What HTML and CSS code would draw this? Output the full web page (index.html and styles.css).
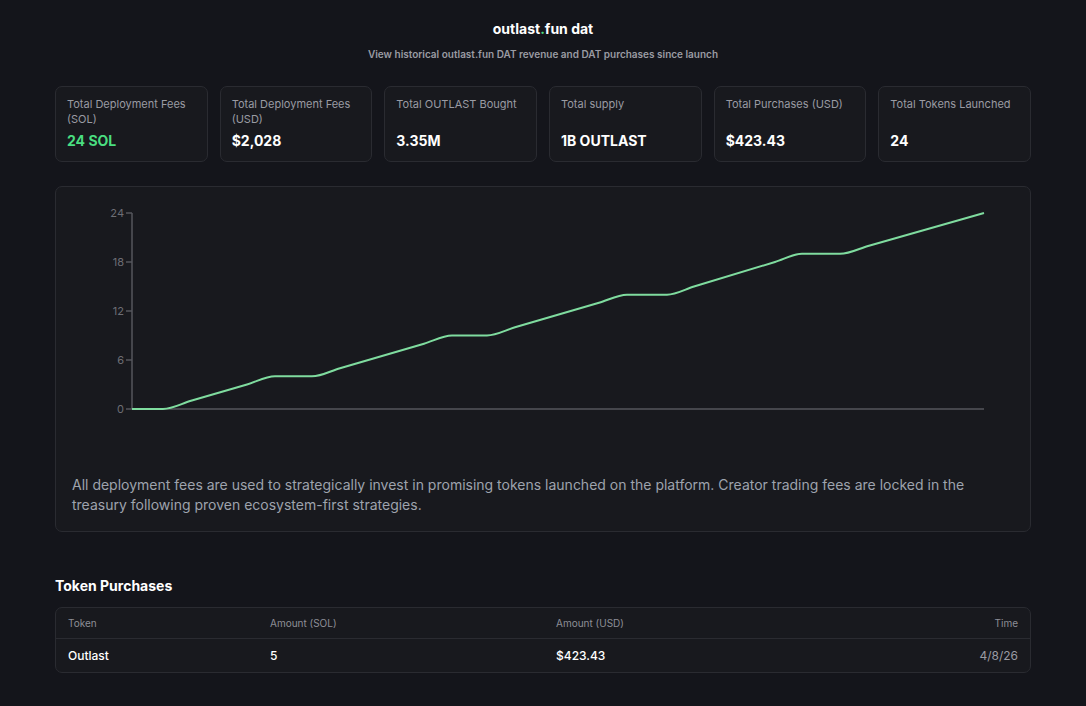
FILE: index.html
```html
<!DOCTYPE html>
<html>
<head>
<meta charset="utf-8">
<link rel="stylesheet" href="styles.css">
</head>
<body>
<main class="page">
  <header class="head">
    <h1 class="title">outlast<span class="dot">.</span>fun dat</h1>
    <p class="subtitle">View historical outlast.fun DAT revenue and DAT purchases since launch</p>
  </header>

  <section class="stats">
    <div class="stat">
      <div class="stat-label">Total Deployment Fees (SOL)</div>
      <div class="stat-value green">24 SOL</div>
    </div>
    <div class="stat">
      <div class="stat-label">Total Deployment Fees (USD)</div>
      <div class="stat-value">$2,028</div>
    </div>
    <div class="stat">
      <div class="stat-label">Total OUTLAST Bought</div>
      <div class="stat-value">3.35M</div>
    </div>
    <div class="stat">
      <div class="stat-label">Total supply</div>
      <div class="stat-value">1B OUTLAST</div>
    </div>
    <div class="stat">
      <div class="stat-label">Total Purchases (USD)</div>
      <div class="stat-value">$423.43</div>
    </div>
    <div class="stat">
      <div class="stat-label">Total Tokens Launched</div>
      <div class="stat-value">24</div>
    </div>
  </section>

  <section class="chart-card">
    <svg class="chart" width="942" height="256" viewBox="0 0 942 256">
      <g class="ticks">
        <line x1="54" y1="10" x2="60" y2="10"/>
        <line x1="54" y1="59" x2="60" y2="59"/>
        <line x1="54" y1="108" x2="60" y2="108"/>
        <line x1="54" y1="157" x2="60" y2="157"/>
        <line x1="54" y1="206" x2="60" y2="206"/>
      </g>
      <g class="tick-labels">
        <text x="52" y="14">24</text>
        <text x="52" y="63">18</text>
        <text x="52" y="112">12</text>
        <text x="52" y="161">6</text>
        <text x="52" y="210">0</text>
      </g>
      <line class="axis" x1="60" y1="10" x2="60" y2="206"/>
      <line class="axis" x1="60" y1="206" x2="912" y2="206"/>
      <path class="series" d="M60,206 L91,206 C100.33,206 109.67,200.55 119,197.83 L175,181.5 C184.33,178.78 193.67,173.33 203,173.33 L240,173.33 C249.33,173.33 258.67,167.89 268,165.17 L352,140.67 C361.33,137.95 370.67,132.5 380,132.5 L415,132.5 C424.33,132.5 433.67,127.05 443,124.33 L527,99.83 C536.33,97.11 545.67,91.67 555,91.67 L595,91.67 C604,91.67 613,86.22 622,83.5 L703,59 C712,56.28 721,50.83 730,50.83 L768,50.83 C777.67,50.83 787.33,45.39 797,42.67 L912,10"/>
    </svg>
    <p class="note">All deployment fees are used to strategically invest in promising tokens launched on the platform. Creator trading fees are locked in the treasury following proven ecosystem-first strategies.</p>
  </section>

  <section class="purchases">
    <h2 class="section-title">Token Purchases</h2>
    <div class="table">
      <div class="row row-head">
        <div>Token</div>
        <div>Amount (SOL)</div>
        <div>Amount (USD)</div>
        <div class="right">Time</div>
      </div>
      <div class="row row-body">
        <div>Outlast</div>
        <div>5</div>
        <div>$423.43</div>
        <div class="right muted">4/8/26</div>
      </div>
    </div>
  </section>
</main>
</body>
</html>
```

FILE: styles.css
```css
* { box-sizing: border-box; }

html, body {
  margin: 0;
  padding: 0;
  background: #14151b;
  color: #ffffff;
  font-family: Inter, "Noto Sans", "Liberation Sans", sans-serif;
}

.page {
  width: 976px;
  margin: 0 auto;
  padding-top: 19px;
}

.head {
  text-align: center;
}

.title {
  margin: 0;
  font-size: 14px;
  line-height: 20px;
  font-weight: 700;
  color: #ffffff;
}

.title .dot {
  color: #4ade80;
}

.subtitle {
  margin: 8px 0 0;
  font-size: 10px;
  line-height: 14px;
  font-weight: 600;
  color: #9a9ba3;
}

.stats {
  margin-top: 25px;
  display: grid;
  grid-template-columns: repeat(6, 1fr);
  gap: 12px;
}

.stat {
  height: 76px;
  background: #18191e;
  border: 1px solid #2a2b31;
  border-radius: 7px;
  padding: 10px 11px 10px 11px;
  display: flex;
  flex-direction: column;
  justify-content: space-between;
}

.stat-label {
  font-size: 11px;
  line-height: 15px;
  color: #9a9ba3;
  min-height: 30px;
}

.stat-value {
  font-size: 14px;
  line-height: 20px;
  font-weight: 700;
  color: #ffffff;
}

.stat-value.green {
  color: #4ade80;
}

.chart-card {
  margin-top: 24px;
  background: #18191e;
  border: 1px solid #2a2b31;
  border-radius: 7px;
  padding: 16px;
}

.chart {
  display: block;
}

.ticks line,
.axis {
  stroke: #55565c;
  stroke-width: 1.5;
}

.tick-labels text {
  fill: #6d6e75;
  font-size: 11px;
  text-anchor: end;
  font-family: Inter, "Noto Sans", sans-serif;
}

.series {
  fill: none;
  stroke: #7fdc9f;
  stroke-width: 2;
  stroke-linejoin: round;
}

.note {
  margin: 16px 0 0;
  font-size: 14px;
  line-height: 20px;
  color: #9ea3ad;
}

.purchases {
  margin-top: 44px;
}

.section-title {
  margin: 0;
  font-size: 14px;
  line-height: 20px;
  font-weight: 700;
  color: #ffffff;
}

.table {
  margin-top: 11px;
  background: #18191e;
  border: 1px solid #2a2b31;
  border-radius: 7px;
}

.row {
  display: grid;
  grid-template-columns: 202px 286px 1fr auto;
  align-items: center;
  padding: 0 12px;
}

.row-head {
  height: 31px;
  font-size: 10px;
  color: #8d8e96;
  border-bottom: 1px solid #2a2b31;
}

.row-body {
  height: 33px;
  font-size: 12px;
  font-weight: 500;
  color: #ffffff;
}

.right {
  text-align: right;
}

.muted {
  color: #9a9ba3;
  font-weight: 400;
}
```
